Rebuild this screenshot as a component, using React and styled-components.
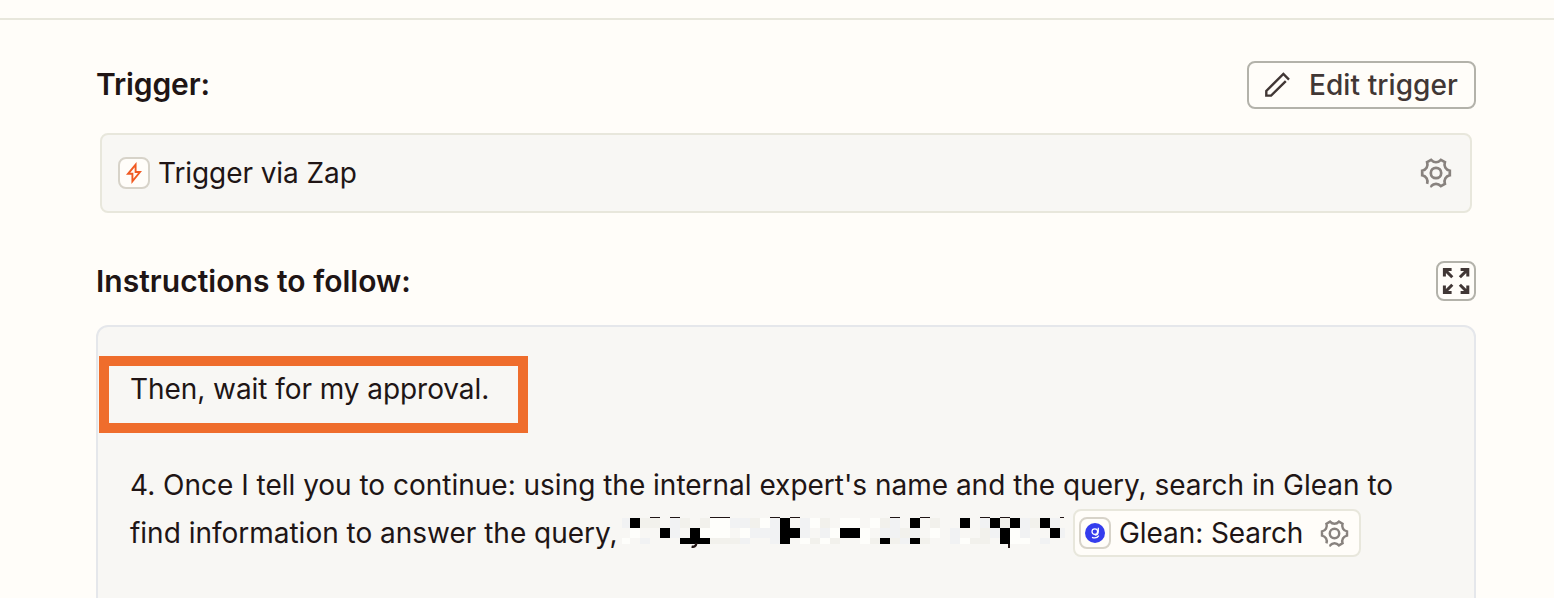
import React from 'react';
import styled, { createGlobalStyle } from 'styled-components';

// each row is one line of 10px wide cells
// b: black, w: white, g: cool grey, e: warm grey, .: empty
const MOSAIC_ROWS = [
  { y: 1, height: 10, cells: 'gbee.ge.ewwggewgb.gwe.ww.weg.b.e..b.gbebgebg.' },
  { y: 11, height: 10, cells: '.w..bg.bwww.wgggbbg.gwbbw.ggeg.w.g..egbwg..bg' },
  { y: 21, height: 6, cells: 'w.g...bbbeeeg..gb.wewe..webegbe..gwee.bww.g..' },
];
const MOSAIC_COLORS = { b: '#000000', w: '#fefefb', g: '#f1f2f3', e: '#f2f1ec' };
const DASHES = [3, 5, 9, 10, 15, 17, 27, 30, 36, 38, 44];

const rotate = (x, y, deg) => {
  const a = (deg * Math.PI) / 180;
  const rx = x * Math.cos(a) - y * Math.sin(a);
  const ry = x * Math.sin(a) + y * Math.cos(a);
  return `${rx.toFixed(2)} ${ry.toFixed(2)}`;
};

// six teeth, left open at the bottom left one
const gearPath = () => {
  let d = `M${rotate(13.8, 2.3, 120)}`;
  for (let i = 0; i < 6; i++) {
    const a = 120 + i * 60;
    d += `C${rotate(9.7, 3.2, a)} ${rotate(9.7, -3.2, a + 60)} ${rotate(13.8, -2.3, a + 60)}`;
    if (i < 5) d += `L${rotate(13.8, 2.3, a + 60)}`;
  }
  return d + `L${rotate(13.8, -1.6, 120)}`;
};

const GearIcon = ({ size }) => (
  <Icon width={size} height={size} viewBox='-16 -16 32 32' fill='none' stroke='#88827e' strokeWidth='2.7'>
    <path d={gearPath()} />
    <circle r='5.2' />
  </Icon>
);

const PencilIcon = () => (
  <Icon width='28' height='28' viewBox='0 0 28 28' fill='none' stroke='#413735' strokeWidth='2.4'>
    <path d='M26 8.6L20.4 3L3.3 19.9V24.6H8.1L22.8 10.2' />
  </Icon>
);

const BoltIcon = () => (
  <Icon width='28' height='28' viewBox='0 0 28 28' fill='none' stroke='#f05a22' strokeWidth='1.9'>
    <path d='M15.6 13V5.6L8 14.8H12.4V22.4L20 13Z' />
  </Icon>
);

const ExpandIcon = () => (
  <Icon width='36' height='36' viewBox='0 0 36 36' fill='none' stroke='#413735' strokeWidth='3'>
    <path d='M6.4 13.6V6.4H13.6M6.4 6.4L14.3 14.3' />
    <path d='M22.6 6.4H29.8V13.6M29.8 6.4L21.9 14.3' />
    <path d='M6.4 22.4V29.6H13.6M6.4 29.6L14.3 21.7' />
    <path d='M29.8 22.4V29.6H22.6M29.8 29.6L21.9 21.7' />
  </Icon>
);

const GleanIcon = () => (
  <Icon width='28' height='28' viewBox='0 0 28 28' fill='none'>
    <circle cx='14' cy='14' r='10' fill='#343ced' />
    <g stroke='#ffffff' strokeWidth='1.25'>
      <circle cx='13.8' cy='12.6' r='2.8' />
      <path d='M17.3 8.8V12.6C17.3 14.8 15.8 16.2 13.8 16.2M17.8 16.6C16.6 18.5 13.8 19.4 11 18.3' />
    </g>
  </Icon>
);

const Mosaic = () => (
  <MosaicArt width='443' height='32' viewBox='0 0 443 32' shapeRendering='crispEdges'>
    {MOSAIC_ROWS.map((row) =>
      row.cells.split('').map((cell, i) => {
        if (cell === '.') return null;
        const x = Math.max(0, i * 10 - 2);
        return (
          <rect
            key={`${row.y}-${i}`}
            x={x}
            y={row.y}
            width={i === 0 ? 8 : i === 44 ? 5 : 10}
            height={row.height}
            fill={MOSAIC_COLORS[cell]}
          />
        );
      })
    )}
    {DASHES.map((i) => (
      <rect key={i} x={i * 10 - 2} y='0' width={i === 44 ? 4 : 10} height='1' fill='#201515' />
    ))}
    <path
      d='M74.5 26C73.8 29.4 72.2 30.2 69.6 29.6'
      fill='none'
      stroke='#201515'
      strokeWidth='2.4'
      shapeRendering='auto'
    />
    <rect x='386' y='27' width='2' height='4' fill='#201515' />
  </MosaicArt>
);

const App = () => {
  return (
    <>
      <GlobalStyle />
      <TopBar />
      <Content>
        <SectionHeader>
          <TriggerHeading>Trigger:</TriggerHeading>
          <EditButton type='button'>
            <PencilIcon />
            Edit trigger
          </EditButton>
        </SectionHeader>
        <TriggerRow>
          <AppIcon>
            <BoltIcon />
          </AppIcon>
          <TriggerName>Trigger via Zap</TriggerName>
          <GearIcon size='32' />
        </TriggerRow>
        <InstructionsHeader>
          <Heading>Instructions to follow:</Heading>
          <ExpandButton type='button' aria-label='Expand'>
            <ExpandIcon />
          </ExpandButton>
        </InstructionsHeader>
        <Instructions>
          <Highlight />
          <Approval>Then, wait for my approval.</Approval>
          <Line $gap>
            4. Once I tell you to continue: using the internal expert's name and the query, search in Glean to
          </Line>
          <Line>
            <LineStart>find information to answer the query,</LineStart>
            <Mosaic />
            <Chip>
              <AppIcon>
                <GleanIcon />
              </AppIcon>
              <ChipName>Glean: Search</ChipName>
              <GearIcon size='29' />
            </Chip>
          </Line>
        </Instructions>
      </Content>
    </>
  );
};

const GlobalStyle = createGlobalStyle`
  * {
    box-sizing: border-box;
  }

  body {
    margin: 0;
    height: 598px;
    overflow: hidden;
    background-color: #fffdf9;
    color: #201515;
    font-family: Inter, 'Liberation Sans', sans-serif;
    font-size: 28px;
  }
`;

const Icon = styled.svg`
  display: block;
  flex-shrink: 0;
`;

const TopBar = styled.div`
  height: 20px;
  border-bottom: 2px solid #e8e7dc;
`;

const Content = styled.main`
  width: 1380px;
  margin-left: 96px;
  padding-top: 41px;
`;

const SectionHeader = styled.div`
  display: flex;
  align-items: center;
  justify-content: space-between;
  height: 48px;
`;

const InstructionsHeader = styled(SectionHeader)`
  height: 40px;
  margin-top: 48px;
`;

const Heading = styled.h2`
  margin: 0;
  font-size: 30px;
  font-weight: 600;
  line-height: 40px;
  letter-spacing: 0.03px;
  white-space: nowrap;
`;

const TriggerHeading = styled(Heading)`
  margin-bottom: 2px;
  letter-spacing: -0.12px;
`;

const EditButton = styled.button`
  display: flex;
  align-items: center;
  gap: 18px;
  width: 229px;
  height: 48px;
  padding: 0 0 0 14px;
  border: 2px solid #b3b2aa;
  border-radius: 8px;
  background: none;
  color: #413735;
  font-family: inherit;
  font-size: 28px;
  font-weight: 500;
  letter-spacing: 0.08px;
  white-space: nowrap;
`;

const TriggerRow = styled.div`
  display: flex;
  align-items: center;
  height: 80px;
  margin: 24px 4px 0;
  padding: 0 18px 0 16px;
  border: 2px solid #e8e7dc;
  border-radius: 8px;
  background-color: #f8f7f4;
`;

const AppIcon = styled.span`
  flex-shrink: 0;
  width: 32px;
  height: 32px;
  border: 2px solid #d7d3c9;
  border-radius: 8px;
  background-color: #fffdf9;
`;

const TriggerName = styled.span`
  flex: 1;
  margin-left: 8px;
  letter-spacing: -0.08px;
  white-space: nowrap;
`;

const ExpandButton = styled.button`
  width: 40px;
  height: 40px;
  padding: 0;
  border: 2px solid #b3b2aa;
  border-radius: 8px;
  background: none;
`;

const Instructions = styled.section`
  position: relative;
  height: 300px;
  margin-top: 24px;
  padding: 38px 0 0 32px;
  border: 2px solid #e5e7eb;
  border-radius: 12px;
  background-color: #f8f7f4;
`;

const Highlight = styled.div`
  position: absolute;
  top: 29px;
  left: 1px;
  width: 429px;
  height: 77px;
  border: 10px solid #ef6d2c;
`;

const Line = styled.div`
  display: flex;
  align-items: center;
  height: 48px;
  margin-top: ${(props) => (props.$gap ? '48px' : '0')};
  line-height: 48px;
  letter-spacing: -0.01px;
  white-space: nowrap;
`;

const Approval = styled(Line)`
  letter-spacing: -0.06px;
`;

const LineStart = styled.span`
  width: 492px;
`;

const MosaicArt = styled.svg`
  display: block;
  flex-shrink: 0;
`;

const Chip = styled.span`
  display: flex;
  align-items: center;
  width: 288px;
  height: 48px;
  margin-left: 8px;
  padding-left: 4px;
  border: 2px solid #e8e7dc;
  border-radius: 8px;
  background-color: #fffdf9;
`;

const ChipName = styled.span`
  width: 201px;
  margin-left: 8px;
  letter-spacing: -0.08px;
`;

export default App;
